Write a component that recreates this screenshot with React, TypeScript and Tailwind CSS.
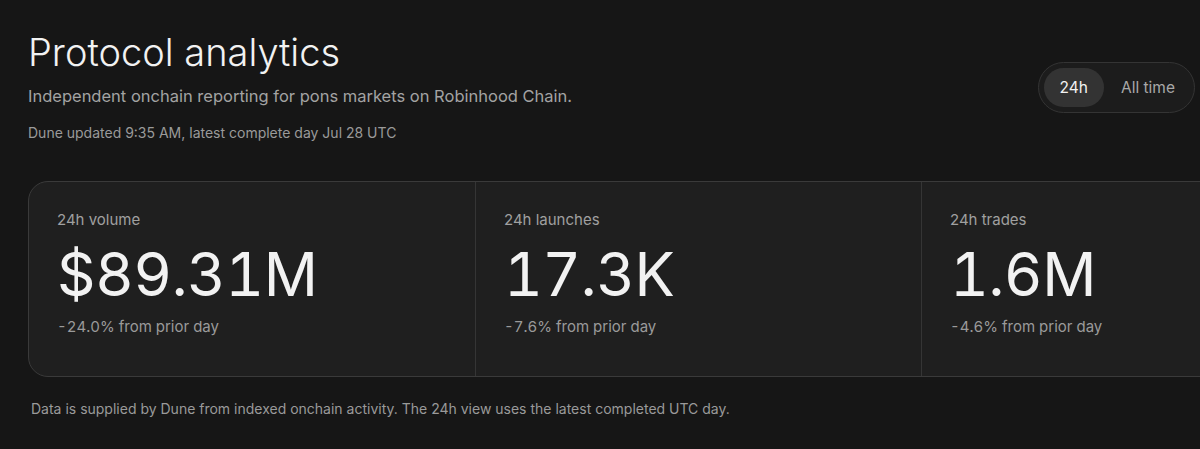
import React from "react";

const STATS = [
  { label: "24h volume", value: "$89.31M", change: "-24.0% from prior day" },
  { label: "24h launches", value: "17.3K", change: "-7.6% from prior day" },
  { label: "24h trades", value: "1.6M", change: "-4.6% from prior day" },
];

export default function App() {
  return (
    <div className="min-h-screen w-[1200px] overflow-hidden bg-[#161616] font-['Inter',sans-serif]">
      <div className="pl-[28px] pr-[5px] pt-[28px]">
        <div className="flex items-start justify-between">
          <div>
            <h1 className="text-[38px] leading-[48px] font-light text-[#f2f2f2]">
              Protocol analytics
            </h1>
            <p className="mt-[8px] text-[16.5px] leading-[24px] text-[#a3a3a3]">
              Independent onchain reporting for pons markets on Robinhood Chain.
            </p>
            <p className="mt-[15px] text-[14px] leading-[20px] text-[#9a9a9a]">
              Dune updated 9:35 AM, latest complete day Jul 28 UTC
            </p>
          </div>
          <div className="mt-[34px] flex items-center rounded-full border border-[#343434] bg-[#1c1c1c] p-[5px]">
            <button className="h-[39px] rounded-full bg-[#333333] px-[16px] text-[15.5px] text-[#f2f2f2]">
              24h
            </button>
            <button className="h-[39px] rounded-full pl-[17px] pr-[14px] text-[15.5px] text-[#a8a8a8]">
              All time
            </button>
          </div>
        </div>

        <div className="mt-[38px] grid w-max grid-cols-[446px_446px_446px] rounded-[20px] border border-[#3a3a3a] bg-[#1f1f1f]">
          {STATS.map((s, i) => (
            <div
              key={s.label}
              className={`px-[28px] pt-[28px] pb-[38px] ${i > 0 ? "border-l border-[#353535]" : ""}`}
            >
              <div className="text-[15px] leading-[20px] text-[#a0a0a0]">{s.label}</div>
              <div className="mt-[12px] text-[60px] leading-[64px] font-normal tabular-nums tracking-[-0.6px] text-[#f2f2f2]">
                {s.value}
              </div>
              <div className="mt-[10px] text-[15px] leading-[22px] tabular-nums text-[#9a9a9a]">{s.change}</div>
            </div>
          ))}
        </div>

        <p className="mt-[22px] pl-[3px] text-[14px] leading-[20px] text-[#9a9a9a]">
          Data is supplied by Dune from indexed onchain activity. The 24h view uses the latest completed UTC day.
        </p>
      </div>
    </div>
  );
}
